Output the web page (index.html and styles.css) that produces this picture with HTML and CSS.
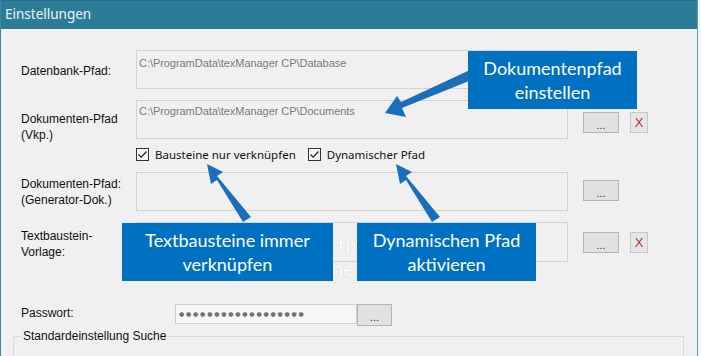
FILE: index.html
```html
<!DOCTYPE html>
<html lang="de">
<head>
<meta charset="utf-8">
<title>Einstellungen</title>
<link rel="stylesheet" href="styles.css">
</head>
<body>
<div class="window">
  <div class="titlebar">Einstellungen</div>
  <div class="content">
    <div class="row row1">
      <div class="label">Datenbank-Pfad:</div>
      <div class="field">C:\ProgramData\texManager CP\Database</div>
    </div>
    <div class="row row2">
      <div class="label">Dokumenten-Pfad<br>(Vkp.)</div>
      <div class="field">C:\ProgramData\texManager CP\Documents</div>
      <div class="btn btn-dots">...</div>
      <div class="btn btn-x">X</div>
    </div>
    <div class="checkrow">
      <label class="check"><span class="box"><svg viewBox="0 0 13 13" width="13" height="13"><path d="M2.5 6.5 L5.2 9.2 L10.5 3.5" fill="none" stroke="#222" stroke-width="1.2"/></svg></span>Bausteine nur verknüpfen</label>
      <label class="check"><span class="box"><svg viewBox="0 0 13 13" width="13" height="13"><path d="M2.5 6.5 L5.2 9.2 L10.5 3.5" fill="none" stroke="#222" stroke-width="1.2"/></svg></span>Dynamischer Pfad</label>
    </div>
    <div class="row row3">
      <div class="label">Dokumenten-Pfad:<br>(Generator-Dok.)</div>
      <div class="field"></div>
      <div class="btn btn-dots">...</div>
    </div>
    <div class="row row4">
      <div class="label">Textbaustein-<br>Vorlage:</div>
      <div class="field"></div>
      <div class="btn btn-dots">...</div>
      <div class="btn btn-x">X</div>
    </div>
    <div class="pwrow">
      <div class="label pwlabel">Passwort:</div>
      <div class="pwfield">●●●●●●●●●●●●●●●●●●</div>
      <div class="btn btn-pw">...</div>
    </div>
    <fieldset class="group">
      <legend>Standardeinstellung Suche</legend>
    </fieldset>
  </div>

  <div class="ghost g1">tba</div>
  <div class="ghost g2">ne</div>

  <svg class="arrows" width="701" height="356" viewBox="0 0 701 356">
    <g fill="#1b6fba">
      <polygon points="470,70 474,79 402,108 406,117 385,113 397,96 401,102"/>
      <polygon points="251,217 243,222 217,180 211,184 207,164 223,172 217,176"/>
      <polygon points="440,217 432,222 406,180 400,184 396,164 412,172 406,176"/>
    </g>
  </svg>

  <div class="callout c1">Dokumentenpfad<br>einstellen</div>
  <div class="callout c2">Textbausteine immer<br>verknüpfen</div>
  <div class="callout c3">Dynamischen Pfad<br>aktivieren</div>
</div>
</body>
</html>
```

FILE: styles.css
```css
* { box-sizing: border-box; }
html, body {
  margin: 0;
  padding: 0;
  background: #f4f4f4;
  font-family: "Liberation Sans", Arial, sans-serif;
}
.window {
  position: relative;
  width: 698px;
  height: 356px;
  background: #f0f0f0;
  border-left: 1px solid #3a87a3;
  border-right: 1px solid #5f9db4;
  overflow: hidden;
}
.titlebar {
  height: 29px;
  background: #2c7b97;
  border-top: 1px solid #23708c;
  color: #eef5f8;
  font-family: "Noto Sans", sans-serif;
  font-size: 13.5px;
  line-height: 27px;
  padding-left: 4px;
}
.content {
  padding-left: 20px;
}
.row {
  display: flex;
  align-items: flex-start;
  height: 39px;
}
.row1 { margin-top: 21px; }
.row2 { margin-top: 11px; }
.row3 { margin-top: 8px; }
.row4 { margin-top: 11px; height: 40px; }
.label {
  width: 115px;
  flex: none;
  font-size: 12px;
  line-height: 16px;
  color: #111;
}
.row1 .label { margin-top: 13px; }
.row2 .label { margin-top: 11px; }
.row3 .label { margin-top: 4px; }
.row4 .label { margin-top: 6px; }
.field {
  width: 432px;
  height: 100%;
  flex: none;
  background: #f0f0f0;
  border: 1px solid #d2d2d2;
  color: #7b7b7b;
  font-size: 11px;
  letter-spacing: -0.05px;
  padding: 4px 2px;
  white-space: nowrap;
  overflow: hidden;
}
.row1 .field { padding-top: 6px; }
.btn {
  flex: none;
  height: 21px;
  display: flex;
  align-items: center;
  justify-content: center;
}
.btn-dots, .btn-pw {
  width: 36px;
  margin-left: 15px;
  background: #e1e1e1;
  border: 1px solid #b4b4b4;
  color: #333;
  font-size: 11px;
  padding-top: 4px;
}
.row2 .btn { margin-top: 12px; }
.row3 .btn { margin-top: 8px; }
.row4 .btn { margin-top: 10px; }
.btn-x {
  width: 18px;
  margin-left: 11px;
  background: #e6e6e6;
  border: 1px solid #c6c6c6;
  color: #b8323a;
  font-size: 13px;
}
.checkrow {
  display: flex;
  align-items: center;
  height: 20px;
  margin-top: 5px;
  padding-left: 115px;
  font-family: "Noto Sans", sans-serif;
  font-size: 11.5px;
  color: #111;
}
.check {
  display: flex;
  align-items: center;
}
.check + .check { margin-left: 12px; }
.box {
  width: 13px;
  height: 13px;
  border: 1px solid #333;
  margin-right: 6px;
  display: flex;
  align-items: center;
  justify-content: center;
  background: #f6f6f6;
}
.box svg { display: block; flex: none; }
.pwrow {
  display: flex;
  align-items: flex-start;
  margin-top: 42px;
}
.pwlabel { width: 154px; margin-top: 1px; }
.pwfield {
  width: 182px;
  height: 20px;
  background: #f6f6f6;
  border: 1px solid #cfcfcf;
  color: #707070;
  font-family: "DejaVu Sans", sans-serif;
  font-size: 6px;
  letter-spacing: 1.8px;
  line-height: 18px;
  padding-left: 3px;
  white-space: nowrap;
  overflow: hidden;
}
.btn-pw {
  margin-left: 0;
  width: 35px;
  height: 22px;
}
.group {
  margin: 3px 0 0 -8px;
  width: 671px;
  height: 60px;
  border: 1px solid #dcdcdc;
  padding: 0;
}
.group legend {
  font-size: 12px;
  color: #111;
  padding: 0 1px;
  margin-left: 8px;
}

.arrows {
  position: absolute;
  left: -1px;
  top: 0;
}
.ghost {
  position: absolute;
  font-family: Lato, sans-serif;
  font-size: 20px;
  color: #ffffff;
  text-shadow: 0 0 1px #bcbcbc;
}
.g1 { left: 337px; top: 232px; }
.g2 { left: 331px; top: 256px; }

.callout {
  position: absolute;
  background: #0070c0;
  color: #fff;
  font-family: Lato, sans-serif;
  font-size: 18px;
  line-height: 24px;
  text-align: center;
  display: flex;
  align-items: center;
  justify-content: center;
}
.c1 { left: 467px; top: 51px; width: 169px; height: 58px; }
.c2 { left: 121px; top: 223px; width: 211px; height: 58px; }
.c3 { left: 356px; top: 223px; width: 179px; height: 58px; }
```
